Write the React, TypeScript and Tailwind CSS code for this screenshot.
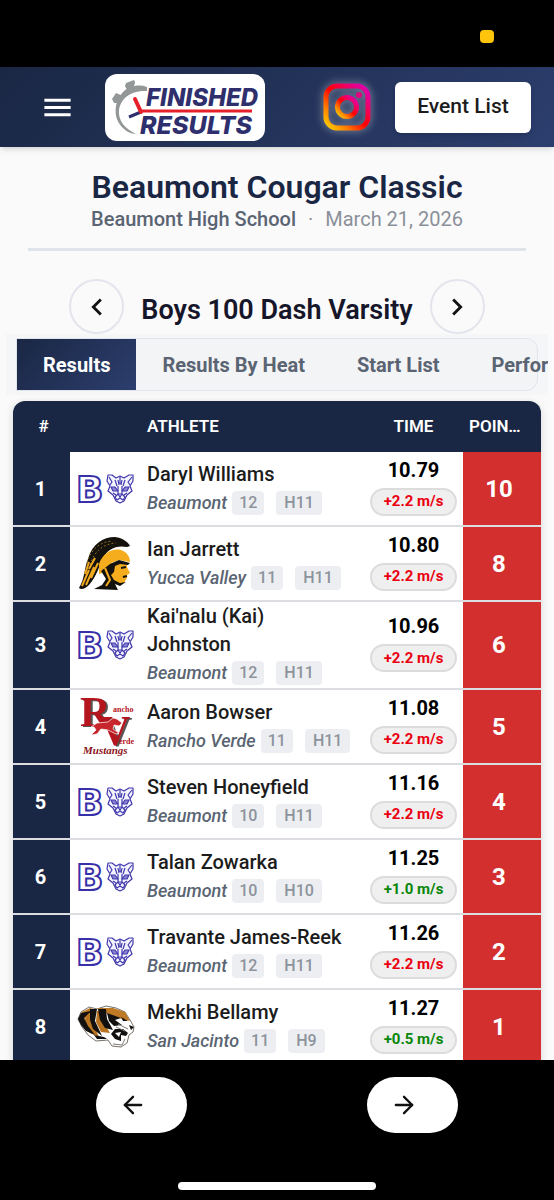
import React, { useState } from "react";
import { ArrowLeft, ArrowRight } from "lucide-react";

type School = "Beaumont" | "Yucca Valley" | "Rancho Verde" | "San Jacinto";

interface Result {
  place: number;
  name: string;
  school: School;
  grade: number;
  heat: string;
  time: string;
  wind: string;
  legal: boolean;
  points: number;
}

const results: Result[] = [
  { place: 1, name: "Daryl Williams", school: "Beaumont", grade: 12, heat: "H11", time: "10.79", wind: "+2.2 m/s", legal: false, points: 10 },
  { place: 2, name: "Ian Jarrett", school: "Yucca Valley", grade: 11, heat: "H11", time: "10.80", wind: "+2.2 m/s", legal: false, points: 8 },
  { place: 3, name: "Kai'nalu (Kai) Johnston", school: "Beaumont", grade: 12, heat: "H11", time: "10.96", wind: "+2.2 m/s", legal: false, points: 6 },
  { place: 4, name: "Aaron Bowser", school: "Rancho Verde", grade: 11, heat: "H11", time: "11.08", wind: "+2.2 m/s", legal: false, points: 5 },
  { place: 5, name: "Steven Honeyfield", school: "Beaumont", grade: 10, heat: "H11", time: "11.16", wind: "+2.2 m/s", legal: false, points: 4 },
  { place: 6, name: "Talan Zowarka", school: "Beaumont", grade: 10, heat: "H10", time: "11.25", wind: "+1.0 m/s", legal: true, points: 3 },
  { place: 7, name: "Travante James-Reek", school: "Beaumont", grade: 12, heat: "H11", time: "11.26", wind: "+2.2 m/s", legal: false, points: 2 },
  { place: 8, name: "Mekhi Bellamy", school: "San Jacinto", grade: 11, heat: "H9", time: "11.27", wind: "+0.5 m/s", legal: true, points: 1 },
];

const tabs = ["Results", "Results By Heat", "Start List", "Performances"];

const BrandLogo: React.FC = () => (
  <svg viewBox="0 0 160 67" className="h-full w-full" role="img" aria-label="Finished Results">
    <path d="M42 13 C34 10 24 12 18 18 C9 27 8 43 16 52 C20 57 26 60 31 60 C21 55 15 49 14 40 C13 27 24 16 42 17 Z" fill="#939798" />
    <path d="M20 12 l1 -3 8 -3 1 2 -1 5 -7 3 Z M7 25 l4 -6 7 3 -4 7 -5 0 Z" fill="#939798" />
    <path d="M24 43 L36 38" stroke="#2f2f6e" strokeWidth="3" />
    <path d="M30 25 L36 38" stroke="#e5202a" strokeWidth="4" strokeLinecap="round" />
    <path d="M35 37 H147" stroke="#e5202a" strokeWidth="3" />
    <text x="41" y="32" fontFamily="Inter, sans-serif" fontSize="24" fontWeight="800" fontStyle="italic" fill="#2f2f6e">
      FINISHED
    </text>
    <text x="35" y="60" fontFamily="Inter, sans-serif" fontSize="25" fontWeight="800" fontStyle="italic" fill="#2f2f6e">
      RESULTS
    </text>
  </svg>
);

const InstagramIcon: React.FC = () => (
  <svg viewBox="0 0 48 48" className="h-12 w-12 drop-shadow-[0_0_4px_rgba(255,255,255,0.5)]" aria-hidden="true">
    <defs>
      <linearGradient id="insta" x1="0" y1="1" x2="1" y2="0">
        <stop offset="0" stopColor="#ffd600" />
        <stop offset="0.25" stopColor="#ff7a00" />
        <stop offset="0.5" stopColor="#ff0100" />
        <stop offset="0.75" stopColor="#f0006a" />
        <stop offset="1" stopColor="#d800b9" />
      </linearGradient>
    </defs>
    <g fill="none" stroke="url(#insta)">
      <rect x="3" y="3" width="42" height="42" rx="11" strokeWidth="5" />
      <circle cx="24" cy="24" r="9.500" strokeWidth="5" />
    </g>
    <circle cx="36" cy="12" r="3" fill="#e6007e" />
  </svg>
);

const BeaumontLogo: React.FC = () => (
  <svg viewBox="0 0 58 34" className="h-[34px] w-[58px]" role="img" aria-label="Beaumont">
    <text x="-1" y="30" fontFamily="DejaVu Sans, sans-serif" fontSize="36" fontWeight="700" fill="#fff" stroke="#3830a8" strokeWidth="2">
      B
    </text>
    <g fill="none" stroke="#4038ac" strokeWidth="1.200" strokeLinejoin="round">
      <path d="M31 3 L35 3 L39 6 L43 4 L47 6 L52 3 L56 3 L56 9 L53 14 L55 19 L50 23 L47 29 L43 31 L39 29 L36 23 L31 19 L33 14 L30 9 Z" fill="#f4f4ff" />
      <path d="M32 5 L35 10 L33 13 M55 5 L51 10 L53 13 M38 8 L40 14 M48 8 L46 14 M43 5 V12 M41 8 L42 13 M45 8 L44 13" />
      <path d="M34 15 L38 15 L41 19 L36 19 Z M52 15 L48 15 L45 19 L50 19 Z" fill="#8a86d4" />
      <path d="M41 14 L41 22 L38 25 L40 28 L43 26 L46 28 L48 25 L45 22 L45 14 M41 22 L45 22 L43 25 Z M36 21 L39 23 M50 21 L47 23" />
    </g>
  </svg>
);

const YuccaValleyLogo: React.FC = () => (
  <svg viewBox="0 0 58 58" className="h-[58px] w-[58px]" role="img" aria-label="Yucca Valley">
    <path d="M2 53 C8 43 7 34 11 24 C15 9 26 2 38 2 C46 3 51 7 53 11 L50 12 C39 10 31 14 26 23 C22 31 20 41 12 50 C8 54 4 55 2 53 Z" fill="#15120d" />
    <path d="M10 28 C14 14 23 7 35 6 M13 30 C17 17 25 9 39 8" fill="none" stroke="#8d6a22" strokeWidth="1" strokeDasharray="2 2" />
    <path d="M5 51 L12 35 M9 50 L17 32 M8 39 L12 27 M14 43 L21 28 M12 34 L18 23" stroke="#f0a81e" strokeWidth="2" />
    <path d="M22 29 C26 18 35 13 44 15 C50 17 53 22 53 27 L42 25 L34 28 L28 37 L22 39 Z" fill="#f5ad1d" />
    <path d="M33 28 L50 27 L50 32 L53 38 L50 40 L50 43 L47 48 L38 49 L31 42 Z" fill="#f5ad1d" />
    <path d="M24 36 L33 29 L42 25 L53 28 L51 30 L43 29 L38 31 L37 37 L34 40 L37 45 L43 48 L49 47 L43 51 L38 49 L41 55 L17 54 L25 50 L29 44 Z" fill="#15120d" />
    <path d="M44 33 L49 32 M46 42 L50 41" stroke="#15120d" strokeWidth="2" fill="none" />
    <path d="M28 33 L33 45 L29 51" fill="none" stroke="#f5ad1d" strokeWidth="2" />
  </svg>
);

const RanchoVerdeLogo: React.FC = () => (
  <svg viewBox="0 0 58 58" className="h-[58px] w-[58px]" role="img" aria-label="Rancho Verde">
    <g fontFamily="Liberation Serif, serif" fontWeight="700" fill="#b5161e">
      <g className="drop-shadow-[2px_1px_0_#555]">
        <text x="3" y="28" fontSize="42">R</text>
        <text x="23" y="47" fontSize="42">V</text>
      </g>
      <text x="36" y="14" fontSize="8">ancho</text>
      <text x="42" y="46" fontSize="8">erde</text>
      <text x="6" y="56" fontSize="11" fontStyle="italic" fill="#8c151b">Mustangs</text>
    </g>
    <path d="M14 29 L20 25 L31 24 L36 20 L40 21 L45 25 L42 28 L37 27 L36 31 L42 35 L39 36 L31 32 L24 31 L20 36 L14 37 L19 32 L17 29 Z" fill="#c7262d" stroke="#fff" strokeWidth="0.700" />
  </svg>
);

const SanJacintoLogo: React.FC = () => (
  <svg viewBox="0 0 58 46" className="h-[46px] w-[58px]" role="img" aria-label="San Jacinto">
    <path d="M1 15 L4 8 L12 3 L20 5 L29 2 L39 4 L48 8 L53 16 L57 23 L56 28 L52 31 L50 39 L44 43 L35 42 L31 36 L19 37 L11 31 L5 23 Z" fill="#fff" stroke="#77716b" strokeWidth="1" />
    <path d="M2 15 L5 8 L13 4 L19 6 L11 12 L4 18 Z M20 4 L36 4 L48 8 L53 17 L42 14 L31 10 Z" fill="#bf7a26" />
    <path d="M5 20 L11 10 L19 7 L15 17 L22 33 L13 29 Z M20 7 L27 7 L26 17 L33 29 L24 28 L19 18 Z" fill="#b87421" />
    <path d="M1 15 L4 9 L14 7 L7 14 L11 22 L18 31 L9 27 L4 21 Z M13 5 L20 5 L18 17 L25 32 L16 25 L13 16 Z M21 5 L29 5 L30 15 L36 26 L28 24 L23 16 Z M30 9 L44 14 L38 16 L45 21 L37 22 L32 17 Z" fill="#13110f" />
    <path d="M44 13 L51 17 L46 17 Z M52 21 L57 23 L54 26 Z M34 30 L38 25 L46 25 L51 29 L49 32 L44 31 L44 37 L38 35 Z M17 31 L27 33 L30 35 L20 35 Z" fill="#13110f" />
    <path d="M41 20 L51 25 M39 23 L48 27 M36 40 L45 41 L48 35" fill="none" stroke="#807a73" strokeWidth="1" />
    <path d="M38 29 L42 33 L44 28 Z" fill="#fff" />
  </svg>
);

const schoolLogos: Record<School, React.FC> = {
  Beaumont: BeaumontLogo,
  "Yucca Valley": YuccaValleyLogo,
  "Rancho Verde": RanchoVerdeLogo,
  "San Jacinto": SanJacintoLogo,
};

const ResultRow: React.FC<{ result: Result }> = ({ result }) => {
  const Logo = schoolLogos[result.school];

  return (
    <tr className="h-[75px]">
      <td className="border-b-2 border-[#dcdde0] bg-[#1a2744] pr-[2px] text-center text-xl font-bold text-white">{result.place}</td>
      <td className="border-b-2 border-[#dcdde0] pl-[7px]">
        <Logo />
      </td>
      <td className="border-b-2 border-[#dcdde0] pl-2">
        <div className="max-w-[204px] text-xl leading-7 font-medium text-[#1c1c1c]">{result.name}</div>
        <div className="flex h-[30px] items-center gap-3 whitespace-nowrap">
          <div className="flex items-center gap-[5px]">
            <span className="text-lg font-medium text-[#5a6472] italic">{result.school}</span>
            <span className="rounded bg-[#eceef1] px-[7px] text-base font-medium text-[#8d939c]">{result.grade}</span>
          </div>
          <span className="rounded bg-[#eceef1] px-2 text-base font-medium text-[#8d939c]">{result.heat}</span>
        </div>
      </td>
      <td className="border-b-2 border-[#dcdde0] pr-[6px] pb-1">
        <div className="ml-auto flex w-[87px] flex-col gap-[6px] text-center">
          <span className="text-xl leading-6 font-bold text-black">{result.time}</span>
          <span
            className={`flex h-7 items-center justify-center rounded-full border-2 border-[#dcdcdc] bg-[#efefef] text-[15px] font-bold whitespace-nowrap ${
              result.legal ? "text-[#0a860a]" : "text-[#eb0010]"
            }`}
          >
            {result.wind}
          </span>
        </div>
      </td>
      <td className="border-b-2 border-[#dcdde0] bg-[#d32f2f] pr-[6px] text-center text-2xl font-bold text-white">{result.points}</td>
    </tr>
  );
};

const App: React.FC = () => {
  const [activeTab, setActiveTab] = useState("Results");

  return (
    <div className="flex h-screen flex-col overflow-hidden bg-[#fafafb] font-['Roboto',sans-serif]">
      <div className="flex h-[67px] shrink-0 justify-end bg-black pt-[30px] pr-[60px]">
        <span className="h-[13px] w-[14px] rounded bg-[#ffc40c]" />
      </div>

      <header className="z-10 flex h-20 shrink-0 items-center bg-linear-135 from-[#1a2744] to-[#2c3e6e] pr-[23px] pl-10 shadow-md">
        <button aria-label="Open menu" className="text-white">
          <svg viewBox="0 0 24 24" className="h-[35px] w-[35px]" fill="currentColor">
            <path d="M3 18h18v-2H3v2zm0-5h18v-2H3v2zm0-7v2h18V6H3z" />
          </svg>
        </button>
        <a href="#home" className="ml-[30px] h-[67px] w-40 shrink-0 rounded-xl bg-white">
          <BrandLogo />
        </a>
        <div className="ml-auto flex items-center gap-6">
          <a href="#instagram" aria-label="Instagram">
            <InstagramIcon />
          </a>
          <button className="h-[51px] w-[136px] rounded-md bg-white text-[21px] font-medium text-[#1c1c1c] shadow-md">Event List</button>
        </div>
      </header>

      <main className="min-h-0 flex-1 overflow-hidden">
        <div className="mx-7 border-b-3 border-[#dfe3ea] pt-5 pb-[17px] text-center">
          <h1 className="text-[32px] leading-10 font-semibold text-[#1a2744]">Beaumont Cougar Classic</h1>
          <p className="flex justify-center gap-3 text-xl leading-6 text-[#8a9099]">
            <span className="font-medium text-[#5a6472]">Beaumont High School</span>
            <span>·</span>
            <span>March 21, 2026</span>
          </p>
        </div>

        <div className="mt-7 flex items-center justify-center gap-[17px]">
          <button aria-label="Previous event" className="flex h-[55px] w-[55px] items-center justify-center rounded-full border-2 border-[#e4e5ec] text-[#111]">
            <svg viewBox="0 0 24 24" className="h-[34px] w-[34px]" fill="currentColor">
              <path d="M15.410 7.410L14 6l-6 6 6 6 1.410-1.410L10.830 12z" />
            </svg>
          </button>
          <h2 className="pt-[6px] text-[27px] leading-9 font-semibold text-[#16162a]">Boys 100 Dash Varsity</h2>
          <button aria-label="Next event" className="flex h-[55px] w-[55px] items-center justify-center rounded-full border-2 border-[#e4e5ec] text-[#111]">
            <svg viewBox="0 0 24 24" className="h-[34px] w-[34px]" fill="currentColor">
              <path d="M10 6L8.590 7.410 13.170 12l-4.580 4.590L10 18l6-6z" />
            </svg>
          </button>
        </div>

        <div className="mx-[6px] overflow-hidden bg-[#f5f6f8] px-[10px] py-1">
          <div role="tablist" className="flex h-[53px] rounded-r-xl border border-[#e1e5eb] bg-[#f3f4f6]">
            {tabs.map((tab) => (
              <button
                key={tab}
                role="tab"
                aria-selected={activeTab === tab}
                onClick={() => setActiveTab(tab)}
                className={`shrink-0 px-[26px] text-xl font-bold ${
                  activeTab === tab ? "bg-linear-135 from-[#1a2744] to-[#2c3e6e] text-white" : "text-[#5a6472]"
                }`}
              >
                {tab}
              </button>
            ))}
          </div>
        </div>

        <div className="mx-[13px] mt-[6px] overflow-hidden rounded-t-xl bg-white shadow-[0_2px_8px_rgba(0,0,0,0.15)]">
          <table className="w-full table-fixed border-separate border-spacing-0">
            <colgroup>
              <col className="w-[57px]" />
              <col className="w-[69px]" />
              <col />
              <col className="w-[97px]" />
              <col className="w-[78px]" />
            </colgroup>
            <thead className="bg-[#1a2744] text-[17px] text-white">
              <tr className="h-[51px]">
                <th className="pl-1 font-semibold">#</th>
                <th aria-label="Team" />
                <th className="pl-2 text-left font-semibold">ATHLETE</th>
                <th className="pr-[2px] font-semibold">TIME</th>
                <th className="px-[6px] font-semibold">
                  <div className="w-14 truncate text-left">POINTS</div>
                </th>
              </tr>
            </thead>
            <tbody>
              {results.map((result) => (
                <ResultRow key={result.place} result={result} />
              ))}
            </tbody>
          </table>
        </div>
      </main>

      <footer className="flex h-[140px] shrink-0 flex-col items-center justify-between bg-black pt-[17px] pb-[10px]">
        <div className="flex w-full justify-around px-[6px]">
          <button aria-label="Back" className="flex h-14 w-[91px] items-center rounded-full bg-white pl-[23px] text-[#111]">
            <ArrowLeft size={28} strokeWidth={2} />
          </button>
          <button aria-label="Forward" className="flex h-14 w-[91px] items-center rounded-full bg-white pl-[23px] text-[#111]">
            <ArrowRight size={28} strokeWidth={2} />
          </button>
        </div>
        <span className="h-2 w-[198px] rounded-full bg-white" />
      </footer>
    </div>
  );
};

export default App;
